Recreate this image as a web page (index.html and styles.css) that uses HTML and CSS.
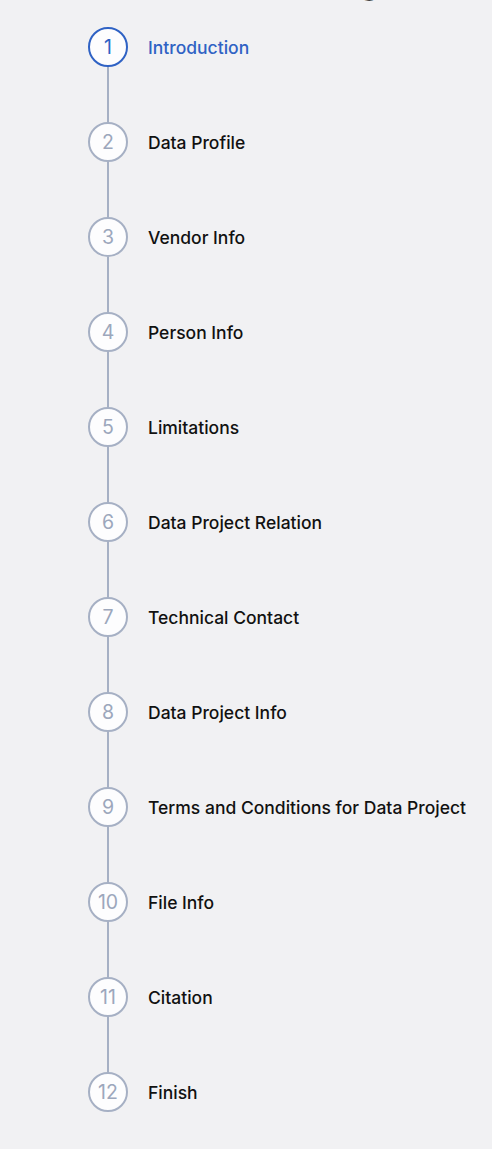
FILE: index.html
```html
<!DOCTYPE html>
<html lang="en">
<head>
<meta charset="utf-8">
<title>Steps</title>
<link rel="stylesheet" href="styles.css">
</head>
<body>
<main class="page">
  <h1 class="title">Data Project Registration</h1>
  <ol class="steps">
    <li class="step active"><span class="circle">1</span><span class="label">Introduction</span><span class="line"></span></li>
    <li class="step"><span class="circle">2</span><span class="label">Data Profile</span><span class="line"></span></li>
    <li class="step"><span class="circle">3</span><span class="label">Vendor Info</span><span class="line"></span></li>
    <li class="step"><span class="circle">4</span><span class="label">Person Info</span><span class="line"></span></li>
    <li class="step"><span class="circle">5</span><span class="label">Limitations</span><span class="line"></span></li>
    <li class="step"><span class="circle">6</span><span class="label">Data Project Relation</span><span class="line"></span></li>
    <li class="step"><span class="circle">7</span><span class="label">Technical Contact</span><span class="line"></span></li>
    <li class="step"><span class="circle">8</span><span class="label">Data Project Info</span><span class="line"></span></li>
    <li class="step"><span class="circle">9</span><span class="label">Terms and Conditions for Data Project</span><span class="line"></span></li>
    <li class="step"><span class="circle">10</span><span class="label">File Info</span><span class="line"></span></li>
    <li class="step"><span class="circle">11</span><span class="label">Citation</span><span class="line"></span></li>
    <li class="step last"><span class="circle">12</span><span class="label">Finish</span></li>
  </ol>
</main>
</body>
</html>
```
FILE: styles.css
```css
* { box-sizing: border-box; }
html, body {
  margin: 0;
  padding: 0;
  background: #f1f1f3;
  font-family: Inter, "Liberation Sans", sans-serif;
  color: #111111;
  overflow: hidden;
}
.page {
  width: 492px;
  height: 1149px;
  overflow: hidden;
}
.title {
  margin: -41px 0 0 0;
  padding-left: 98px;
  font-size: 35px;
  line-height: 42px;
  font-weight: 700;
  color: #111;
  white-space: nowrap;
}
.steps {
  list-style: none;
  margin: 26px 0 0 0;
  padding: 0 0 0 88px;
}
.step {
  display: grid;
  grid-template-columns: 40px 1fr;
  grid-template-rows: 40px 55px;
  column-gap: 20px;
}
.step.last {
  grid-template-rows: 40px;
}
.circle {
  grid-row: 1;
  grid-column: 1;
  width: 40px;
  height: 40px;
  border-radius: 50%;
  border: 2px solid #a6b0c4;
  background: #fdfdfe;
  color: #9ca7bc;
  display: flex;
  align-items: center;
  justify-content: center;
  font-size: 19.5px;
  font-weight: 400;
}
.label {
  grid-row: 1;
  grid-column: 2;
  align-self: center;
  padding-top: 1px;
  font-size: 17.5px;
  font-weight: 500;
  color: #111111;
  white-space: nowrap;
}
.line {
  grid-row: 2;
  grid-column: 1;
  justify-self: center;
  width: 2px;
  height: 100%;
  background: #a6b0c4;
}
.step.active .circle {
  border-color: #2f62c4;
  color: #2f62c4;
}
.step.active .label {
  color: #2f62c4;
}
```
